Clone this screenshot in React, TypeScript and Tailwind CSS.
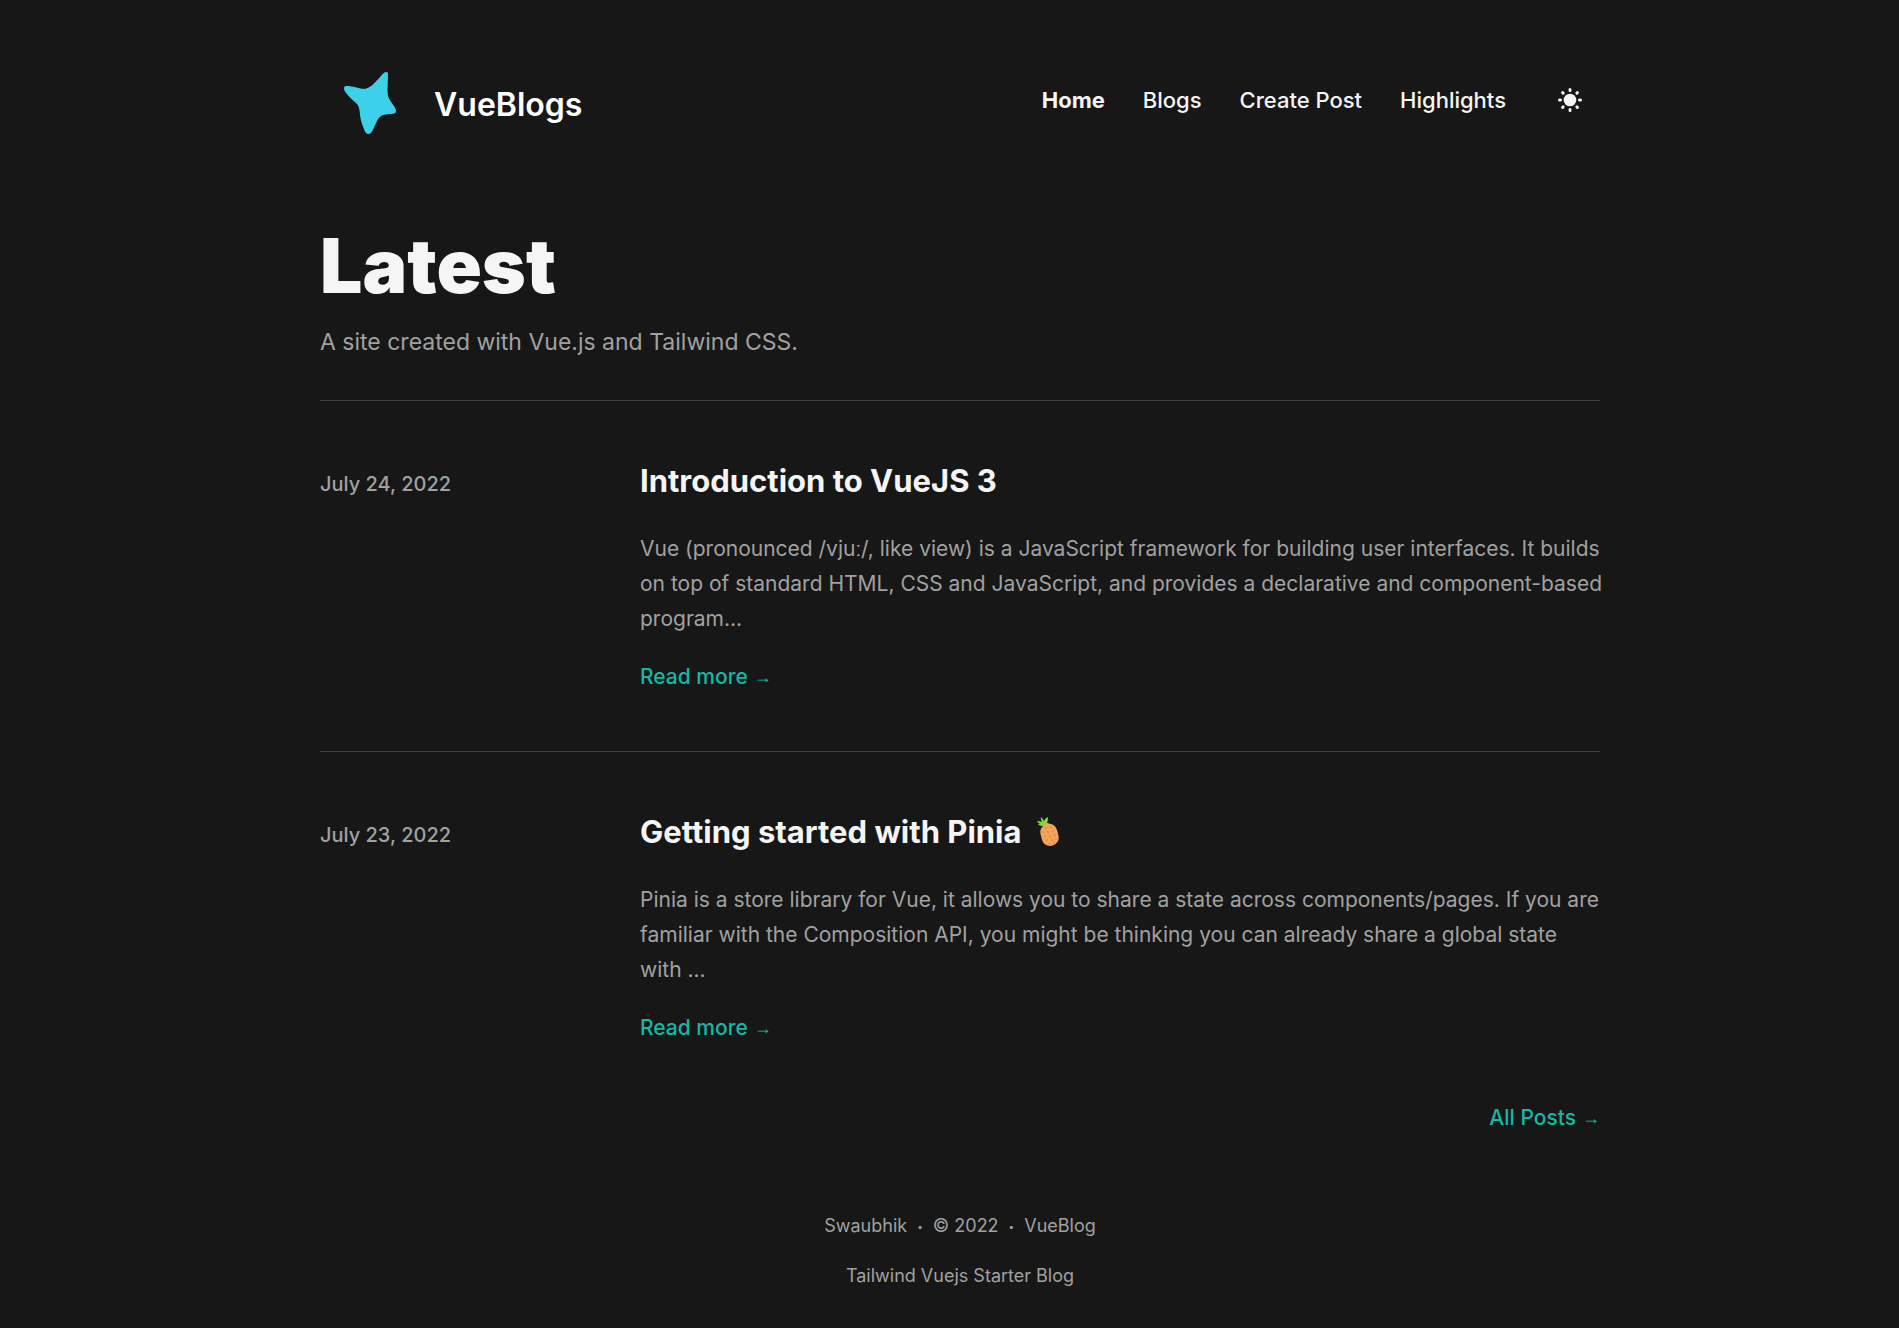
const posts = [
  {
    date: 'July 24, 2022',
    title: 'Introduction to VueJS 3',
    pineapple: false,
    lines: [
      'Vue (pronounced /vjuː/, like view) is a JavaScript framework for building user interfaces. It builds',
      'on top of standard HTML, CSS and JavaScript, and provides a declarative and component-based',
      'program...',
    ],
  },
  {
    date: 'July 23, 2022',
    title: 'Getting started with Pinia',
    pineapple: true,
    lines: [
      'Pinia is a store library for Vue, it allows you to share a state across components/pages. If you are',
      'familiar with the Composition API, you might be thinking you can already share a global state',
      'with ...',
    ],
  },
];

function Logo() {
  return (
    <svg viewBox="0 0 52 62" className="h-[62px] w-[52px]" aria-hidden="true">
      <path
        fill="#3dd1e9"
        d="M42.500 0 C44 0 44 1 44 3 L43.700 13 C43.500 18 43.300 21 44.300 24.700 C46 30 52 34.500 52 39 C52 42 49 41.700 46 42 C42 42.500 39 42.300 36 44.700 C33 47.500 31.500 53 29.300 57 C28 60 26.500 62 24.300 62 C22 62 20.500 59 19.300 55.300 C17.500 51 16.500 47 16 43 C15.700 39 15.500 36 13.700 33 C11 29.500 7 27 3.700 23 C1.500 20.500 0 18.500 0 16.500 C0 13.800 2 14 4.300 14 L11 15 C15 16 18 17.200 21.700 16.700 C26.500 15.500 30.500 11 34.300 7 C37.500 3.500 39.500 0 42.500 0 Z"
      />
    </svg>
  );
}

function SunIcon() {
  return (
    <svg viewBox="0 0 24 24" className="size-6" aria-hidden="true">
      <circle cx="12" cy="12" r="6.300" fill="#f5f5f5" />
      <path
        stroke="#f5f5f5"
        strokeWidth="3"
        strokeLinecap="round"
        d="M12 1.500v1M12 21.500v1M1.500 12h1M21.500 12h1M4.600 4.600l.5 .5M18.900 18.900l.5 .5M4.600 19.400l.5 -.5M18.900 5.100l.5 -.5"
      />
    </svg>
  );
}

function Pineapple() {
  return (
    <svg viewBox="0 0 24 30" className="h-[30px] w-6" role="img" aria-label="pineapple">
      <path fill="#86d72f" d="M0 4 Q3 4 5 5 Q3 2 4 0 Q6 2 7 4 Q8 1 11 0 Q11 4 10 6 L12 6 Q11 9 7 9 Q2 9 1 7 L3 7 Q1 6 0 4Z" />
      <rect x="4" y="7" width="17" height="22" rx="8" fill="#f5a55b" transform="rotate(-14 12 18)" />
      <path
        stroke="#de9048"
        strokeWidth="2"
        strokeLinecap="round"
        d="M9 11v.5M14 10v.5M6 15v.5M11 15v.5M16 14v.5M8 19v.5M13 19v.5M18 18v.5M10 23v.5M15 23v.5M19 22v.5M13 27v.5M17 26v.5"
      />
    </svg>
  );
}

function ArrowLink({ label }: { label: string }) {
  return (
    <a href="#" className="inline-flex items-center gap-1.5 text-[21px] leading-7 font-medium text-[#14b8a6]">
      {label}
      <span className="font-['Liberation_Sans',sans-serif] text-lg font-normal">→</span>
    </a>
  );
}

export default function App() {
  return (
    <div className="min-h-screen bg-[#171717] pl-[21px] font-['Inter',sans-serif] text-xl text-neutral-400">
      <div className="mx-auto max-w-[1280px]">
        <header className="flex items-center justify-between pt-[72px] pb-[94px]">
          <a href="#" className="flex items-center pl-6 text-white">
            <Logo />
            <span className="ml-[38px] pt-1 text-[32px] leading-10 font-semibold">VueBlogs</span>
          </a>
          <div className="flex items-center pb-1.5">
            <nav className="flex gap-[38px] text-[22px] font-medium text-neutral-100">
              <a href="#" className="font-bold">Home</a>
              <a href="#">Blogs</a>
              <a href="#">Create Post</a>
              <a href="#">Highlights</a>
            </nav>
            <button type="button" aria-label="Toggle theme" className="mr-1.5 ml-10 p-3">
              <SunIcon />
            </button>
          </div>
        </header>
        <main>
          <div className="border-b border-neutral-700 pb-10">
            <h1 className="text-[75px] leading-none font-black text-neutral-100">Latest</h1>
            <p className="mt-[21px] text-[23px] leading-9">A site created with Vue.js and Tailwind CSS.</p>
          </div>
          <ul className="divide-y divide-neutral-700">
            {posts.map((post) => (
              <li key={post.title} className="grid grid-cols-4 py-[60px]">
                <time className="pt-1.5 leading-[35px] font-medium">{post.date}</time>
                <article className="col-span-3">
                  <h2 className="flex items-center gap-4 text-[31px] leading-10 font-bold text-neutral-100">
                    {post.title}
                    {post.pineapple && <Pineapple />}
                  </h2>
                  <p className="mt-[30px] text-[21px] leading-[35px]">
                    {post.lines.map((line) => (
                      <span key={line} className="block xl:whitespace-nowrap">{line}</span>
                    ))}
                  </p>
                  <div className="mt-[27px]">
                    <ArrowLink label="Read more" />
                  </div>
                </article>
              </li>
            ))}
          </ul>
          <div className="flex justify-end pt-0.5">
            <ArrowLink label="All Posts" />
          </div>
        </main>
        <footer className="mt-20 flex flex-col items-center gap-[22px] pb-10 text-lg leading-7">
          <div className="flex gap-2.5">
            <span>Swaubhik</span>
            <span className="text-[10px]">•</span>
            <span>© 2022</span>
            <span className="text-[10px]">•</span>
            <a href="#">VueBlog</a>
          </div>
          <a href="#">Tailwind Vuejs Starter Blog</a>
        </footer>
      </div>
    </div>
  );
}
